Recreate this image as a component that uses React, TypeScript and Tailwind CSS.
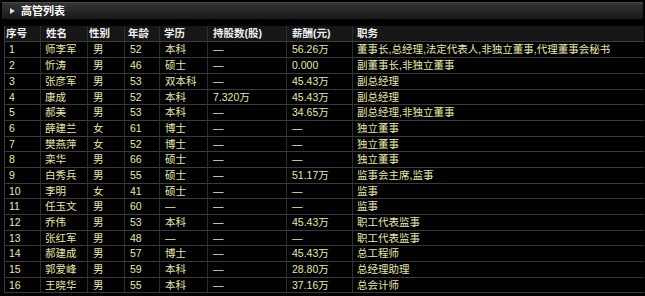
import React from "react";

type Row = [string, string, string, string, string, string, string, string];

const rows: Row[] = [
  ["1", "师李军", "男", "52", "本科", "—", "56.26万", "董事长,总经理,法定代表人,非独立董事,代理董事会秘书"],
  ["2", "忻涛", "男", "46", "硕士", "—", "0.000", "副董事长,非独立董事"],
  ["3", "张彦军", "男", "53", "双本科", "—", "45.43万", "副总经理"],
  ["4", "康成", "男", "52", "本科", "7.320万", "45.43万", "副总经理"],
  ["5", "郝美", "男", "53", "本科", "—", "34.65万", "副总经理,非独立董事"],
  ["6", "薛建兰", "女", "61", "博士", "—", "—", "独立董事"],
  ["7", "樊燕萍", "女", "52", "博士", "—", "—", "独立董事"],
  ["8", "栾华", "男", "66", "硕士", "—", "—", "独立董事"],
  ["9", "白秀兵", "男", "55", "硕士", "—", "51.17万", "监事会主席,监事"],
  ["10", "李明", "女", "41", "硕士", "—", "—", "监事"],
  ["11", "任玉文", "男", "60", "—", "—", "—", "监事"],
  ["12", "乔伟", "男", "53", "本科", "—", "45.43万", "职工代表监事"],
  ["13", "张红军", "男", "48", "—", "—", "—", "职工代表监事"],
  ["14", "郝建成", "男", "57", "博士", "—", "45.43万", "总工程师"],
  ["15", "郭爱峰", "男", "59", "本科", "—", "28.80万", "总经理助理"],
  ["16", "王晓华", "男", "55", "本科", "—", "37.16万", "总会计师"],
];

const headers = ["序号", "姓名", "性别", "年龄", "学历", "持股数(股)", "薪酬(元)", "职务"];
const headPad = ["pl-[1px]", "pl-[5px]", "pl-[1px]", "pl-[3px]", "pl-[4px]", "pl-[5px]", "pl-[5px]", "pl-[4px]"];
const dataPad = ["pl-[4px]", "pl-[4px]", "pl-[5px]", "pl-[5px]", "pl-[5px]", "pl-[5px]", "pl-[5px]", "pl-[4px]"];

const gridCls = "grid grid-cols-[36px_47px_37px_35px_48px_79px_66px_1fr]";

export default function App() {
  return (
    <div className="w-[645px] h-[296px] bg-black overflow-hidden pt-[2px] font-['Liberation_Sans','Noto_Sans_CJK_SC',sans-serif]">
      <div className="mx-[2px] h-[17px] border-t border-[#4a4a4a] bg-linear-to-b from-[#353535] to-[#1a1a1a] flex items-center">
        <span className="ml-[8px] w-0 h-0 border-l-[5px] border-l-[#dddddd] border-y-[3px] border-y-transparent" />
        <span className="ml-[6px] text-[11px] leading-none font-bold text-white">高管列表</span>
      </div>
      <div className="mt-[7px] ml-[4px] mr-[1px] border-l border-[#3a3a3a]">
        <div className={`${gridCls} h-[16px] bg-[#161616] border-b border-[#3e3e3e]`}>
          {headers.map((h, i) => (
            <div
              key={h}
              className={`flex items-center ${headPad[i]} text-[10.5px] leading-none font-bold text-[#f0f0f0] whitespace-nowrap ${i < 7 ? "border-r border-[#2e2e2e]" : ""}`}
            >
              {h}
            </div>
          ))}
        </div>
        {rows.map((r, ri) => (
          <div
            key={ri}
            className={`${gridCls} ${ri % 3 === 0 && ri > 0 ? "h-[15px]" : "h-[16px]"} border-b border-[#3a3a3a]`}
          >
            {r.map((c, ci) => (
              <div
                key={ci}
                className={`flex items-center ${dataPad[ci]} text-[10.5px] leading-none text-[#e8e8a8] whitespace-nowrap overflow-hidden ${ci < 7 ? "border-r border-[#2e2e2e]" : ""}`}
              >
                {c}
              </div>
            ))}
          </div>
        ))}
      </div>
    </div>
  );
}
